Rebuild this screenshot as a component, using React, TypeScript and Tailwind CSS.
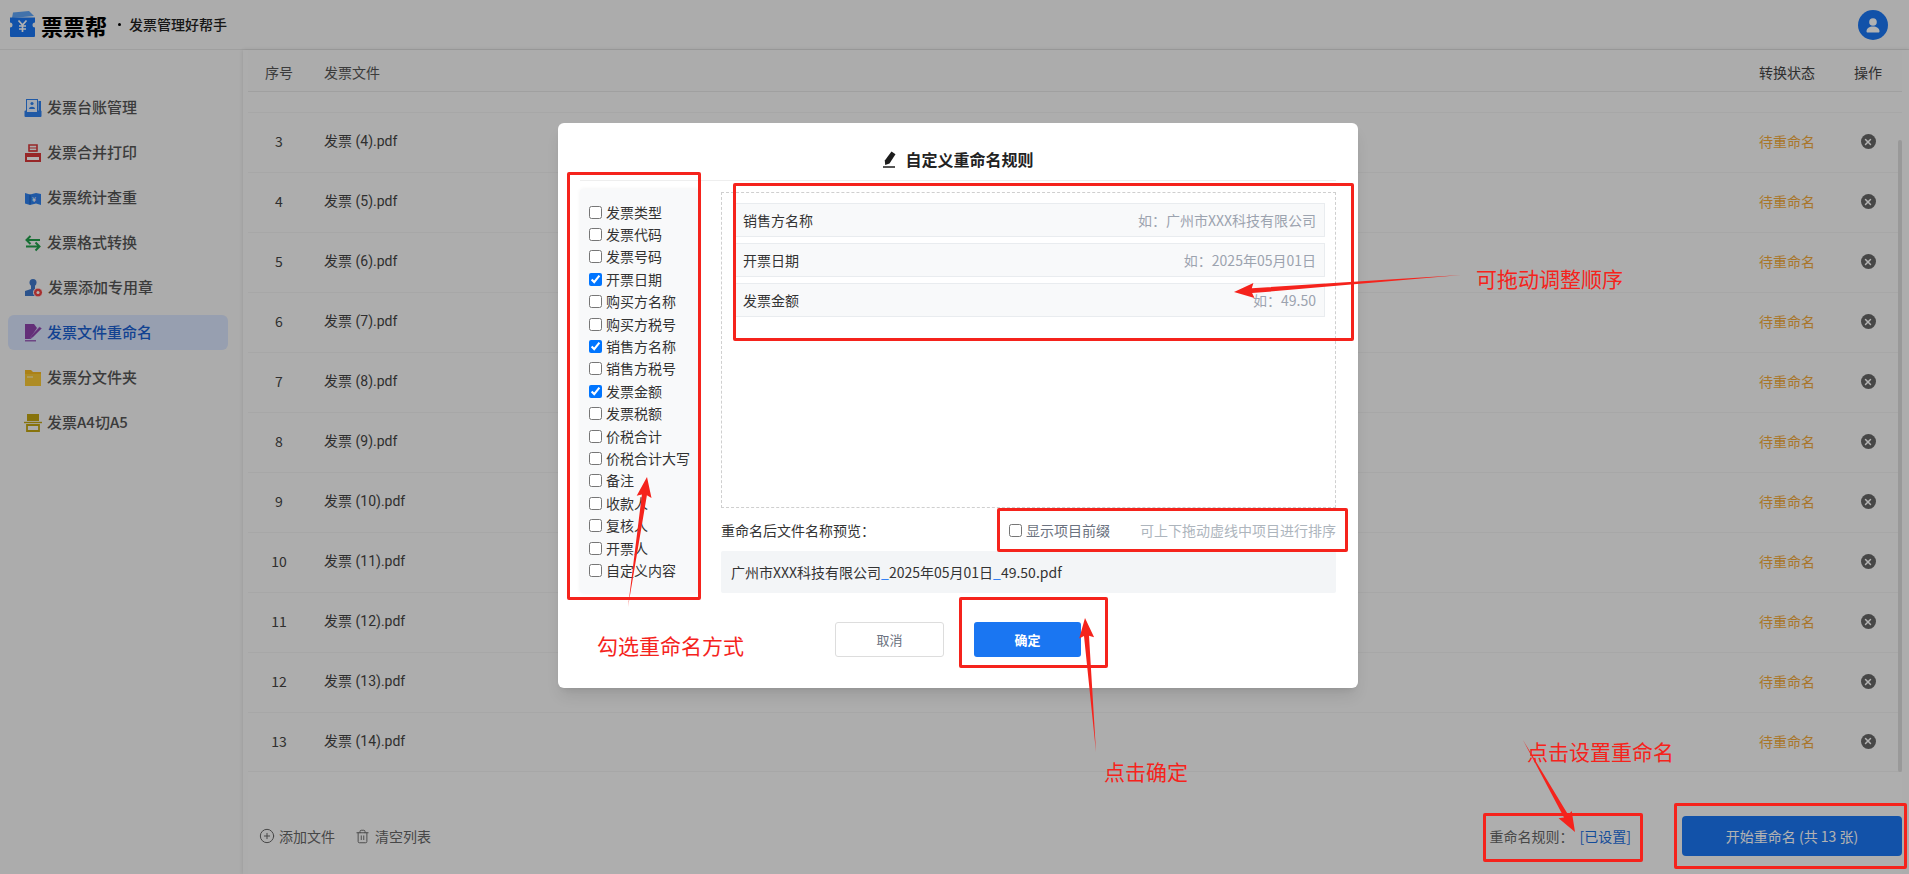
import { CirclePlus, Trash2, X } from "lucide-react"

const navItems = [
  { name: "发票台账管理", icon: "ledger" },
  { name: "发票合并打印", icon: "print" },
  { name: "发票统计查重", icon: "stats" },
  { name: "发票格式转换", icon: "convert" },
  { name: "发票添加专用章", icon: "stamp" },
  { name: "发票文件重命名", icon: "rename", active: true },
  { name: "发票分文件夹", icon: "folder" },
  { name: "发票A4切A5", icon: "cut" },
]

const fields = [
  { name: "发票类型" },
  { name: "发票代码" },
  { name: "发票号码" },
  { name: "开票日期", checked: true },
  { name: "购买方名称" },
  { name: "购买方税号" },
  { name: "销售方名称", checked: true },
  { name: "销售方税号" },
  { name: "发票金额", checked: true },
  { name: "发票税额" },
  { name: "价税合计" },
  { name: "价税合计大写" },
  { name: "备注" },
  { name: "收款人" },
  { name: "复核人" },
  { name: "开票人" },
  { name: "自定义内容" },
]

const sortable = [
  { name: "销售方名称", hint: "如：广州市XXX科技有限公司" },
  { name: "开票日期", hint: "如：2025年05月01日" },
  { name: "发票金额", hint: "如：49.50" },
]

const rows = Array.from({ length: 11 }, (_, i) => i + 3)

function NavIcon({ type }: { type: string }) {
  switch (type) {
    case "ledger":
      return (
        <svg viewBox="0 0 18 18" className="h-[18px] w-[18px]">
          <rect x="0.500" y="11.500" width="17" height="6.500" rx="1" fill="#2f80ed" />
          <rect x="2.500" y="0.500" width="11" height="13" fill="#eaf3ff" stroke="#2f80ed" />
          <rect x="14.500" y="2" width="2.500" height="10" fill="#2f80ed" />
          <circle cx="8" cy="4.500" r="1.600" fill="#2f80ed" />
          <path d="M5 10c0-3 6-3 6 0z" fill="#2f80ed" />
        </svg>
      )
    case "print":
      return (
        <svg viewBox="0 0 18 18" className="h-[18px] w-[18px]">
          <path d="M5 1h8v6H5z" fill="none" stroke="#d9383a" strokeWidth="1.600" />
          <path d="M5 4h8M5 7h8" stroke="#d9383a" />
          <path d="M1 9h16v9H1z" fill="#d9383a" />
          <rect x="3" y="13" width="12" height="3" fill="#fff" />
        </svg>
      )
    case "stats":
      return (
        <svg viewBox="0 0 18 18" className="h-[18px] w-[18px]">
          <path d="M1 4l5 1.500L12 4l5 1v11l-5-1.500-6 1.500-5-1.500z" fill="#2f80ed" />
          <path d="M6 5.500v10" stroke="#1c5fb8" />
          <text x="10" y="12.500" fontSize="7" fill="#fff" textAnchor="middle">¥</text>
        </svg>
      )
    case "convert":
      return (
        <svg viewBox="0 0 18 18" className="h-[18px] w-[18px]" fill="none" stroke="#22a04b" strokeWidth="2">
          <path d="M16 6H3M6.500 2 2.500 6l4 4" />
          <path d="M2 12.500h13.500M11.500 8.500l4 4-4 4" />
        </svg>
      )
    case "stamp":
      return (
        <svg viewBox="0 0 19 18" className="h-[18px] w-[19px]">
          <circle cx="9" cy="3.500" r="3.500" fill="#3f78c9" />
          <path d="M7 6h4v4l4 2v5H1v-5l6-2z" fill="#3f78c9" />
          <circle cx="14" cy="13.500" r="4.500" fill="#f04444" stroke="#fff" />
          <circle cx="14" cy="13.500" r="1.500" fill="#fff" />
        </svg>
      )
    case "rename":
      return (
        <svg viewBox="0 0 18 18" className="h-[18px] w-[18px]">
          <path d="M1 0h9l3 4-4 6-2 5H1z" fill="#8e44ad" />
          <path d="M17.500 4.500 9 13l-3 1.500L7.500 11.500 15.500 3z" fill="#8e44ad" stroke="#ad6fc9" strokeWidth="0.500" />
          <path d="M1 16.800h11" stroke="#8e44ad" strokeWidth="1.200" />
        </svg>
      )
    case "folder":
      return (
        <svg viewBox="0 0 18 18" className="h-[18px] w-[18px]">
          <path d="M1 1h6l2 2h8v14H1z" fill="#f5b921" />
          <path d="M1 5h16v12H1z" fill="#f9c935" />
          <path d="M3 8h6" stroke="#fff" strokeWidth="0.800" />
        </svg>
      )
    default:
      return (
        <svg viewBox="0 0 18 18" className="h-[18px] w-[18px]">
          <path d="M3 0h12v7H3z" fill="#c2a512" />
          <path d="M0 8.500h18" stroke="#c2a512" strokeWidth="1.400" />
          <path d="M3 11h12v6H3z" fill="none" stroke="#c2a512" strokeWidth="1.800" />
        </svg>
      )
  }
}

function Logo() {
  return (
    <svg viewBox="0 0 27 27" className="h-[27px] w-[27px]">
      <path d="M3 7 4 1.500 20 0l5 5z" fill="#5fa4f5" />
      <path d="M1 6.500h25v5a2.500 2.500 0 0 0 0 5v8.500a1 1 0 0 1-1 1H2a1 1 0 0 1-1-1v-8.500a2.500 2.500 0 0 0 0-5z" fill="#1a76f2" />
      <path d="M9.500 9.500 13.500 14l4-4.500M13.500 14v7M10 15h7M10 18h7" fill="none" stroke="#fff" strokeWidth="1.700" />
    </svg>
  )
}

// tapered hand-drawn arrow, thin at the tail
function arrow(x1: number, y1: number, x2: number, y2: number) {
  const len = Math.hypot(x2 - x1, y2 - y1)
  const ux = (x2 - x1) / len
  const uy = (y2 - y1) / len
  const nx = -uy
  const ny = ux
  const bx = x2 - ux * 18
  const by = y2 - uy * 18
  const pt = (x: number, y: number) => `${x.toFixed(1)},${y.toFixed(1)}`
  return [
    pt(x1, y1),
    pt(bx + nx * 2.5, by + ny * 2.5),
    pt(bx + nx * 7.5 - ux * 2, by + ny * 7.5 - uy * 2),
    pt(x2, y2),
    pt(bx - nx * 7.5 - ux * 2, by - ny * 7.5 - uy * 2),
    pt(bx - nx * 2.5, by - ny * 2.5),
  ].join(" ")
}

function Annotations() {
  return (
    <div className="pointer-events-none absolute inset-0 font-['Noto_Sans_CJK_SC',sans-serif]">
      <div className="absolute left-[567px] top-[172px] h-[428px] w-[134px] rounded-[2px] border-[3px] border-[#f5231c]" />
      <div className="absolute left-[733px] top-[183px] h-[158px] w-[621px] rounded-[2px] border-[3px] border-[#f5231c]" />
      <div className="absolute left-[997px] top-[508px] h-[44px] w-[351px] rounded-[2px] border-[3px] border-[#f5231c]" />
      <div className="absolute left-[959px] top-[597px] h-[71px] w-[149px] rounded-[2px] border-[3px] border-[#f5231c]" />
      <div className="absolute left-[1483px] top-[813px] h-[49px] w-[160px] rounded-[2px] border-[3px] border-[#f5231c]" />
      <div className="absolute left-[1674px] top-[803px] h-[66px] w-[233px] rounded-[2px] border-[3px] border-[#f5231c]" />
      <svg className="absolute inset-0 h-full w-full" viewBox="0 0 1909 874">
        <polygon points={arrow(1461, 275, 1234, 292)} fill="#f5231c" />
        <polygon points={arrow(628, 607, 647, 477)} fill="#f5231c" />
        <polygon points={arrow(1096, 752, 1085, 618)} fill="#f5231c" />
        <polygon points={arrow(1523, 740, 1575, 832)} fill="#f5231c" />
      </svg>
      <span className="absolute left-[597px] top-[630px] text-[21px] leading-[30px] text-[#f5231c]">勾选重命名方式</span>
      <span className="absolute left-[1476px] top-[263px] text-[21px] leading-[30px] text-[#f5231c]">可拖动调整顺序</span>
      <span className="absolute left-[1104px] top-[756px] text-[21px] leading-[30px] text-[#f5231c]">点击确定</span>
      <span className="absolute left-[1527px] top-[736px] text-[21px] leading-[30px] text-[#f5231c]">点击设置重命名</span>
    </div>
  )
}

function RenameDialog() {
  return (
    <div className="absolute inset-0 bg-black/30 pl-[558px] pt-[123px]">
      <div className="flex h-[565px] w-[800px] flex-col rounded-[6px] bg-white px-[22px] shadow-lg">
        <div className="flex h-[58px] items-center justify-center gap-[9px] border-b border-[#eeeeee] pt-[20px] pb-[5px]">
          <svg viewBox="0 0 14 17" className="h-[17px] w-[14px]">
            <path d="M9.500 0.500 13.500 3.200 7.500 12.500 3.200 14 2.800 9.500z" fill="#1c1c1c" />
            <path d="M1 16h12" stroke="#1c1c1c" strokeWidth="1.500" />
          </svg>
          <span className="text-[16px] font-semibold text-[#222]">自定义重命名规则</span>
        </div>
        <div className="flex gap-[22px] pt-[8px]">
          <div className="w-[119px] shrink-0 rounded-[4px] bg-[#f8f9fa] pl-[9px] pt-[12px] pb-[11px] shadow-[0_0_4px_rgba(0,0,0,0.06)]">
            {fields.map((f) => (
              <label key={f.name} className="flex h-[22.4px] items-center gap-[4px] text-[14px] text-[#333]">
                <input type="checkbox" defaultChecked={f.checked} className="h-[13px] w-[13px] shrink-0" />
                <span>{f.name}</span>
              </label>
            ))}
          </div>
          <div className="flex min-w-0 flex-1 flex-col pt-[3px]">
            <div className="flex h-[316px] flex-col gap-[6px] border border-dashed border-[#cfcfcf] px-[13px] pt-[10px]">
              {sortable.map((s) => (
                <div
                  key={s.name}
                  className="flex h-[34px] w-[590px] items-center justify-between border border-[#e9ecef] bg-[#f8f9fa] pl-[7px] pr-[8px] text-[14px]"
                >
                  <span className="text-[#333]">{s.name}</span>
                  <span className="text-[#9ca3af]">{s.hint}</span>
                </div>
              ))}
            </div>
            <div className="flex h-[43px] items-center justify-between pt-[2px] text-[14px]">
              <span className="text-[#333]">重命名后文件名称预览：</span>
              <div className="flex items-center">
                <label className="flex items-center gap-[4px] text-[#6b7280]">
                  <input type="checkbox" className="h-[13px] w-[13px]" />
                  <span>显示项目前缀</span>
                </label>
                <span className="ml-[30px] text-[#adb5bd]">可上下拖动虚线中项目进行排序</span>
              </div>
            </div>
            <div className="flex h-[42px] items-center rounded-[2px] bg-[#f3f5f7] px-[10px] text-[14px] text-[#333]">
              广州市XXX科技有限公司<span className="text-[#1a76f2]">_</span>2025年05月01日<span className="text-[#1a76f2]">_</span>49.50.pdf
            </div>
          </div>
        </div>
        <div className="mt-[29px] flex gap-[30px] pl-[255px]">
          <button className="h-[35px] w-[109px] rounded-[3px] border border-[#dddddd] bg-white text-[13px] text-[#6b7280]">取消</button>
          <button className="h-[35px] w-[107px] rounded-[3px] bg-[#1a76f2] text-[13px] font-semibold text-white">确定</button>
        </div>
      </div>
    </div>
  )
}

export default function App() {
  return (
    <div className="relative flex h-[874px] w-full flex-col overflow-hidden bg-[#f6f6f6] font-['Noto_Sans_CJK_SC',sans-serif]">
      <header className="flex h-[50px] shrink-0 items-center border-b border-[#e4e4e4] pl-[9px] pr-[21px]">
        <Logo />
        <span className="ml-[5px] text-[22px] font-bold leading-none text-black">票票帮</span>
        <span className="ml-[11px] h-[3px] w-[3px] rounded-full bg-black" />
        <span className="ml-[8px] text-[14px] font-medium text-[#222]">发票管理好帮手</span>
        <div className="ml-auto flex h-[30px] w-[30px] items-center justify-center rounded-full bg-[#1a76f2]">
          <svg viewBox="0 0 16 16" className="h-[16px] w-[16px]" fill="#fff">
            <circle cx="8" cy="5" r="3.800" />
            <path d="M1.500 14.500c0-3.500 3-5 6.500-5s6.500 1.500 6.500 5c0 .5-.5 1-1 1h-11c-.5 0-1-.5-1-1z" />
          </svg>
        </div>
      </header>
      <div className="flex min-h-0 flex-1">
        <aside className="w-[243px] shrink-0 pl-[8px] pr-[15px] pt-[40px]">
          {navItems.map((item) => (
            <div
              key={item.name}
              className={`mb-[10px] flex h-[35px] items-center gap-[5px] rounded-[6px] pl-[16px] text-[15px] font-medium ${
                item.active ? "bg-[#d8e4fc] text-[#1a5fd0]" : "text-[#555]"
              }`}
            >
              <NavIcon type={item.icon} />
              <span>{item.name}</span>
            </div>
          ))}
        </aside>
        <main className="flex min-w-0 flex-1 flex-col bg-[#f8f8f8] pl-[5px] pr-[7px] shadow-[0_0_4px_rgba(0,0,0,0.12)]">
          <div className="flex h-[42px] shrink-0 items-center border-b border-[#e6e6e6] bg-[#f6f6f6] pt-[4px] text-[14px] text-[#555]">
            <span className="w-[76px] pl-[17px]">序号</span>
            <span className="flex-1">发票文件</span>
            <span className="w-[56px] text-[#444]">转换状态</span>
            <span className="w-[87px] pl-[39px] text-[#444]">操作</span>
          </div>
          <div className="relative min-h-0 flex-1 pt-[20px]">
            <div className="absolute right-0 top-[48px] h-[632px] w-[4px] rounded-full bg-[#dcdcdc]" />
            {rows.map((n) => (
              <div key={n} className="flex h-[60px] items-center border-t border-[#efefef] pb-[2px] text-[14px] text-[#444] last:border-b">
                <span className="w-[62px] text-center">{n}</span>
                <span className="ml-[14px] flex-1 font-['Roboto','Noto_Sans_CJK_SC',sans-serif]">发票 ({n + 1}).pdf</span>
                <span className="w-[56px] text-[#f2aa3c]">待重命名</span>
                <span className="flex w-[87px] justify-center pl-[19px]">
                  <span className="flex h-[15px] w-[15px] items-center justify-center rounded-full bg-[#666]">
                    <X className="h-[10px] w-[10px] text-white" strokeWidth={3.5} />
                  </span>
                </span>
              </div>
            ))}
          </div>
          <div className="flex h-[102px] shrink-0 items-center bg-[#fafafa] pl-[11px] pr-0 pt-[26px] text-[14px] text-[#666]">
            <CirclePlus className="h-[16px] w-[16px]" strokeWidth={1.5} />
            <span className="ml-[4px]">添加文件</span>
            <Trash2 className="ml-[20px] h-[15px] w-[15px]" strokeWidth={1.5} />
            <span className="ml-[5px]">清空列表</span>
            <span className="ml-auto">重命名规则：</span>
            <span className="ml-[6px] text-[#1a6ddc]">[已设置]</span>
            <button className="ml-[51px] h-[40px] w-[220px] rounded-[4px] bg-[#1a76f2] text-[14px] text-white">开始重命名 (共 13 张)</button>
          </div>
        </main>
      </div>
      <RenameDialog />
      <Annotations />
    </div>
  )
}
